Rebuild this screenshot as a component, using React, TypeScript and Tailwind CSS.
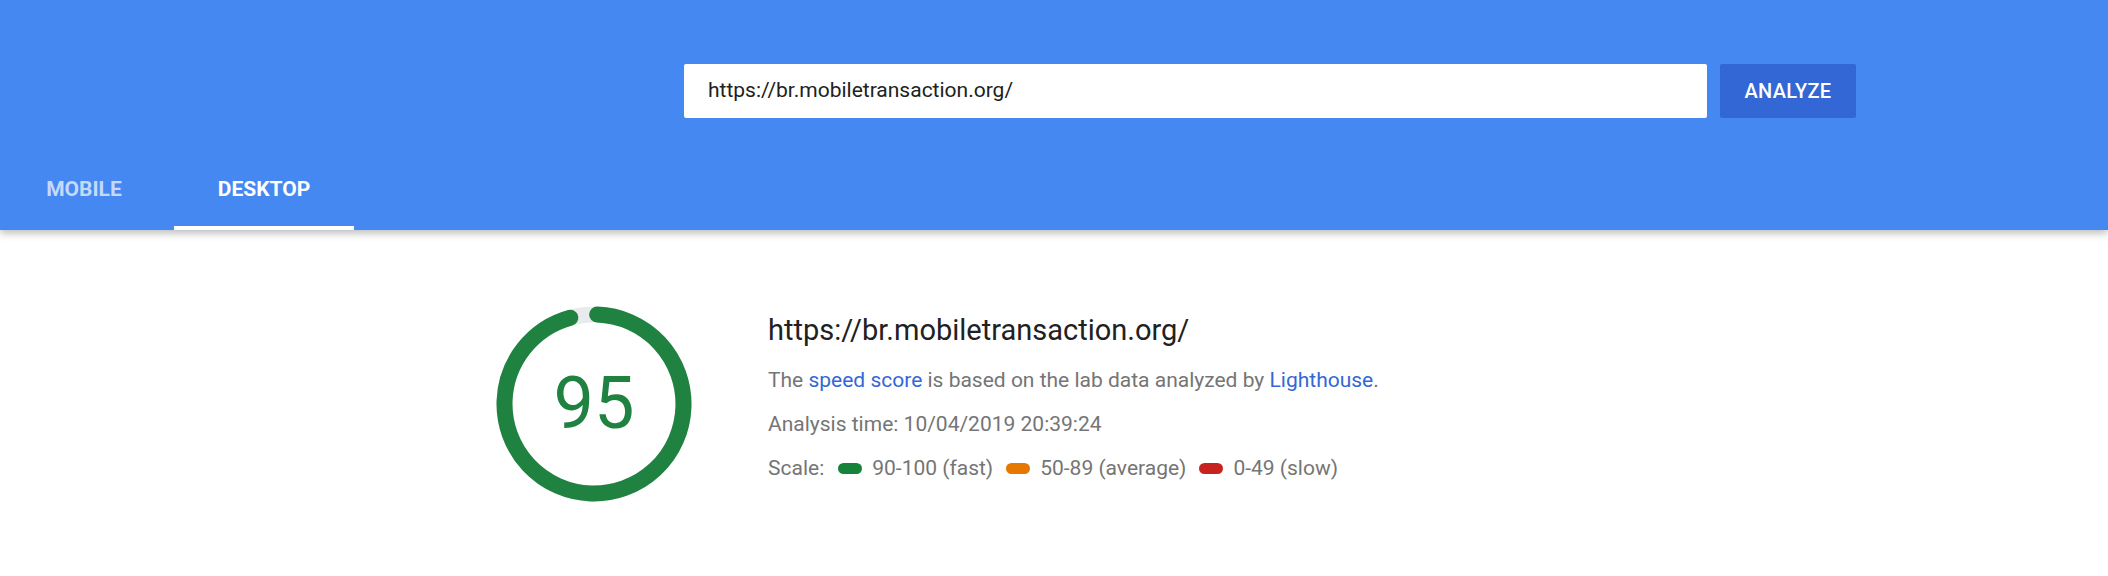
import React from "react";

const url = "https://br.mobiletransaction.org/";

const scale = [
  { color: "bg-[#178239]", label: "90-100 (fast)" },
  { color: "bg-[#e67700]", label: "50-89 (average)" },
  { color: "bg-[#c7221f]", label: "0-49 (slow)" },
];

function Gauge({ score }: { score: number }) {
  const r = 89.5;
  const c = 2 * Math.PI * r;
  return (
    <div className="relative h-[196px] w-[196px] shrink-0">
      <svg width="196" height="196" viewBox="0 0 196 196" className="-rotate-90">
        <circle cx="98" cy="98" r={r} fill="none" stroke="#e8eaed" strokeWidth="16" />
        <circle
          cx="98"
          cy="98"
          r={r}
          fill="none"
          stroke="#1f8240"
          strokeWidth="16"
          strokeLinecap="round"
          strokeDasharray={`${(score / 100) * c} ${c}`}
          transform="rotate(2 98 98)"
        />
      </svg>
      <div className="absolute inset-0 flex items-center justify-center text-[72px] leading-none text-[#1f8240]">
        {score}
      </div>
    </div>
  );
}

export default function App() {
  return (
    <div className="min-h-[576px] w-full bg-white font-['Roboto',sans-serif]">
      <header className="relative z-10 bg-[#4688f1] shadow-[0_3px_8px_rgba(0,0,0,0.28)]">
        <div className="flex items-center gap-[13px] pl-[684px] pt-[64px]">
          <div className="flex h-[54px] w-[1023px] items-center rounded-[2px] bg-white pl-6 text-[21px] text-[#212121]">
            {url}
          </div>
          <button className="flex h-[54px] w-[136px] items-center justify-center rounded-[2px] bg-[#3367d6] text-[20px] font-medium tracking-[0.3px] text-white">
            ANALYZE
          </button>
        </div>
        <nav className="mt-[32px] flex h-[80px] text-[21px] font-bold">
          <div className="flex w-[168px] items-center justify-center text-white/70">MOBILE</div>
          <div className="relative ml-[6px] flex w-[180px] items-center justify-center text-white">
            DESKTOP
            <span className="absolute bottom-0 left-0 h-[4px] w-full bg-white" />
          </div>
        </nav>
      </header>

      <main className="flex pl-[496px] pt-[76px]">
        <Gauge score={95} />
        <div className="ml-[76px] mt-[6px] flex flex-col">
          <h1 className="text-[29px] leading-[36px] text-[#212121]">{url}</h1>
          <p className="mt-5 text-[21px] leading-[24px] text-[#757575]">
            The <a className="text-[#3367d6]">speed score</a> is based on the lab data analyzed by{" "}
            <a className="text-[#3367d6]">Lighthouse</a>.
          </p>
          <p className="mt-5 text-[21px] leading-[24px] text-[#757575]">
            Analysis time: 10/04/2019 20:39:24
          </p>
          <div className="mt-5 flex items-center text-[21px] leading-[24px] text-[#757575]">
            <span className="mr-[14px]">Scale:</span>
            {scale.map((s) => (
              <span key={s.label} className="mr-[13px] flex items-center">
                <span className={`mr-[10px] h-[11px] w-[24px] rounded-full ${s.color}`} />
                {s.label}
              </span>
            ))}
          </div>
        </div>
      </main>
    </div>
  );
}
